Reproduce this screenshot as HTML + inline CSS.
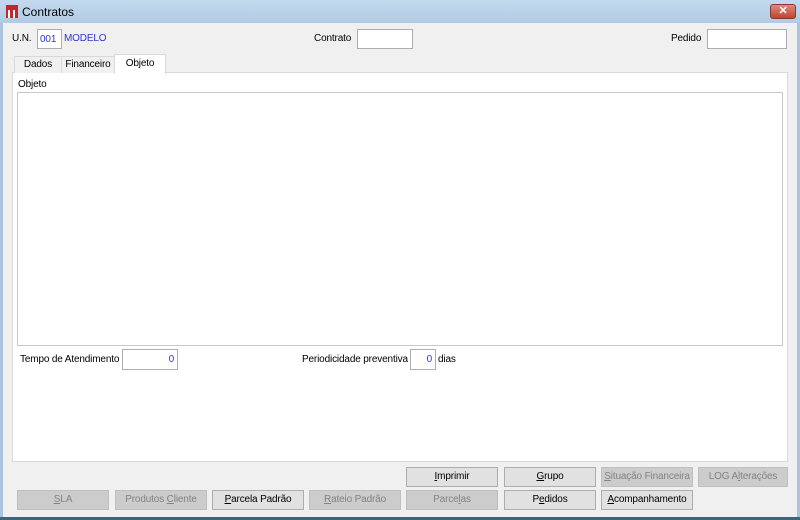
<!DOCTYPE html>
<html><head><style>
*{box-sizing:border-box;margin:0;padding:0}
body{width:800px;height:520px;overflow:hidden;background:#a9c4de;font-family:"Liberation Sans",sans-serif;font-size:10px;letter-spacing:-0.15px;color:#000;position:relative}
.a{position:absolute;white-space:nowrap}
#title{left:0;top:0;width:800px;height:23px;background:linear-gradient(#c3d9ee,#b2cbe4)}
#body{left:3px;top:23px;width:794px;height:494px;background:#f0f0f0}
#bottom{left:0;top:517px;width:800px;height:3px;background:#2f6c7c}
.box{background:#fff;border:1px solid #abadb3}
.btn{background:#e1e1e1;border:1px solid #adadad;text-align:center;line-height:18px;height:20px;width:92px}
.dis{background:#cccccc;border-color:#bfbfbf;color:#838383}
.blue{color:#3333cc}
u{text-decoration:underline}
</style></head><body>
<div id="title" class="a"></div>
<div class="a" style="left:6px;top:5px;width:12px;height:13px;background:#c0282a"></div>
<div class="a" style="left:8px;top:10px;width:2px;height:8px;background:#fff"></div>
<div class="a" style="left:13px;top:10px;width:2px;height:8px;background:#fff"></div>
<div class="a" style="left:22px;top:5px;font-size:12px;letter-spacing:0">Contratos</div>
<div class="a" style="left:770px;top:4px;width:26px;height:15px;background:linear-gradient(#e08a7c,#c2432f);border:1px solid #8a3b2f;border-radius:3px;color:#fff;font-weight:bold;text-align:center;line-height:13px;font-size:11px">✕</div>
<div id="body" class="a"></div>
<div id="bottom" class="a"></div>

<div class="a" style="left:12px;top:33px">U.N.</div>
<div class="a box blue" style="left:37px;top:29px;width:25px;height:20px;padding:4px 2px">001</div>
<div class="a blue" style="left:64px;top:33px">MODELO</div>
<div class="a" style="left:314px;top:33px">Contrato</div>
<div class="a box" style="left:357px;top:29px;width:56px;height:20px"></div>
<div class="a" style="left:671px;top:33px">Pedido</div>
<div class="a box" style="left:707px;top:29px;width:80px;height:20px"></div>

<div class="a" style="left:12px;top:72px;width:776px;height:390px;background:#fff;border:1px solid #d9d9d9"></div>
<div class="a" style="left:14px;top:56px;width:48px;height:17px;border:1px solid #d9d9d9;border-bottom:none;background:#f0f0f0;text-align:center;line-height:16px">Dados</div>
<div class="a" style="left:61px;top:56px;width:54px;height:17px;border:1px solid #d9d9d9;border-bottom:none;background:#f0f0f0;text-align:center;line-height:16px">Financeiro</div>
<div class="a" style="left:114px;top:54px;width:52px;height:20px;border:1px solid #d9d9d9;border-bottom:none;background:#fff;text-align:center;line-height:17px">Objeto</div>

<div class="a" style="left:18px;top:79px">Objeto</div>
<div class="a" style="left:17px;top:92px;width:766px;height:254px;background:#fff;border:1px solid #c8c8c8"></div>

<div class="a" style="left:20px;top:354px">Tempo de Atendimento</div>
<div class="a box blue" style="left:122px;top:349px;width:56px;height:21px;text-align:right;padding:4px 3px">0</div>
<div class="a" style="left:302px;top:354px">Periodicidade preventiva</div>
<div class="a box blue" style="left:410px;top:349px;width:26px;height:21px;text-align:right;padding:4px 3px">0</div>
<div class="a" style="left:438px;top:354px">dias</div>

<div class="a btn" style="left:406px;top:467px"><u>I</u>mprimir</div>
<div class="a btn" style="left:504px;top:467px"><u>G</u>rupo</div>
<div class="a btn dis" style="left:601px;top:467px"><u>S</u>ituação Financeira</div>
<div class="a btn dis" style="left:698px;top:467px;width:90px">LOG A<u>l</u>terações</div>
<div class="a btn dis" style="left:17px;top:490px"><u>S</u>LA</div>
<div class="a btn dis" style="left:115px;top:490px">Produtos <u>C</u>liente</div>
<div class="a btn" style="left:212px;top:490px"><u>P</u>arcela Padrão</div>
<div class="a btn dis" style="left:309px;top:490px"><u>R</u>ateio Padrão</div>
<div class="a btn dis" style="left:406px;top:490px">Parce<u>l</u>as</div>
<div class="a btn" style="left:504px;top:490px">P<u>e</u>didos</div>
<div class="a btn" style="left:601px;top:490px"><u>A</u>companhamento</div>
</body></html>
